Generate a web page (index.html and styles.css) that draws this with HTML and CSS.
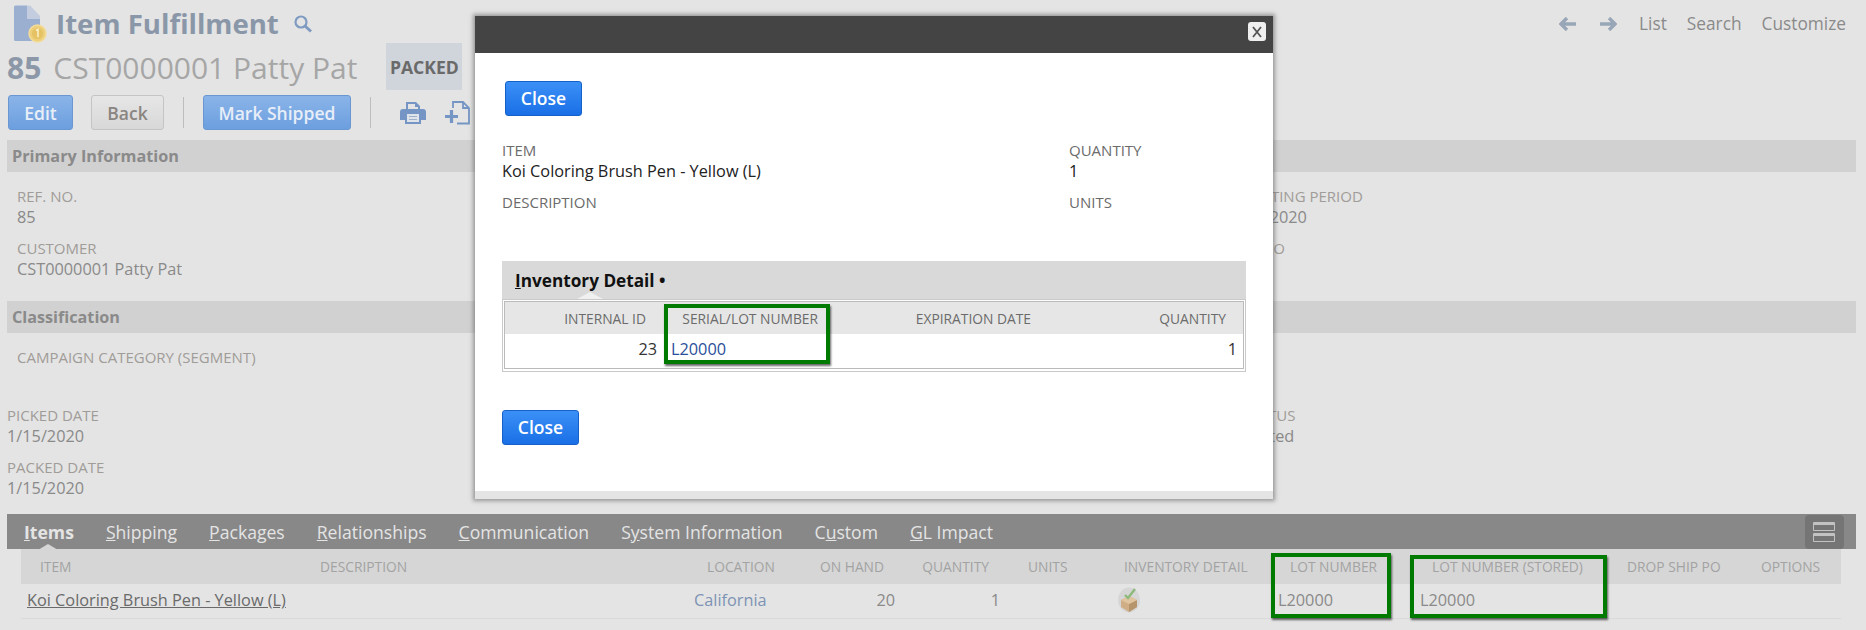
FILE: index.html
```html
<!DOCTYPE html>
<html lang="en">
<head>
<meta charset="utf-8">
<title>Item Fulfillment</title>
<link rel="stylesheet" href="styles.css">
</head>
<body>
<div class="page">
  <header class="title-row">
    <div class="title-left">
      <svg class="doc-icon" width="34" height="38" viewBox="0 0 34 38">
        <path d="M1 2a1.500 1.500 0 0 1 1.500-1.500H14V12a2 2 0 0 0 2 2h11v22H2.500A1.500 1.500 0 0 1 1 34.500z" fill="#9bafd0"/>
        <path d="M14 .5h3L27 11v3H16a2 2 0 0 1-2-2z" fill="#c3cddf"/>
        <circle cx="24.500" cy="28.500" r="8.500" fill="#eccf78" stroke="#f3dc9b" stroke-width="1.500"/>
        <circle cx="24.500" cy="28.500" r="5.500" fill="#e5c263"/>
        <path d="M23 25.500l2-1.200v8" fill="none" stroke="#fbf0cb" stroke-width="1.500"/>
      </svg>
      <h1 class="title">Item Fulfillment</h1>
      <svg class="search-icon" width="20" height="20" viewBox="0 0 20 20">
        <circle cx="8" cy="8" r="5.500" fill="none" stroke="#7f9bc2" stroke-width="2.200"/>
        <path d="M12 12l6 5.500" stroke="#7f9bc2" stroke-width="3" fill="none"/>
      </svg>
    </div>
    <nav class="top-nav">
      <svg class="arrow" width="18" height="14" viewBox="0 0 18 14"><path d="M8 1L2 7l6 6M2.500 7H17" fill="none" stroke="#99a6b8" stroke-width="3.400"/></svg>
      <svg class="arrow arrow-next" width="18" height="14" viewBox="0 0 18 14"><path d="M10 1l6 6-6 6M15.500 7H1" fill="none" stroke="#99a6b8" stroke-width="3.400"/></svg>
      <span class="nav-link nav-list">List</span>
      <span class="nav-link nav-search">Search</span>
      <span class="nav-link">Customize</span>
    </nav>
  </header>

  <div class="record-row">
    <span class="record-num">85</span>
    <span class="record-name">CST0000001 Patty Pat</span>
    <span class="badge">PACKED</span>
  </div>

  <div class="toolbar">
    <button class="btn btn-primary btn-edit">Edit</button>
    <button class="btn btn-plain">Back</button>
    <span class="divider"></span>
    <button class="btn btn-primary btn-ship">Mark Shipped</button>
    <span class="divider"></span>
    <svg class="print-icon" width="26" height="24" viewBox="0 0 26 24">
      <path d="M6 1h10l4 4v4H6z" fill="#7596c4"/>
      <path d="M8 3h7v3h3v2H8z" fill="#e4e4e4"/>
      <path d="M3 8h20a3 3 0 0 1 3 3v8h-5v4H5v-4H0v-8a3 3 0 0 1 3-3z" fill="#7596c4"/>
      <rect x="7" y="13" width="12" height="8" fill="#dfe3ea"/>
      <path d="M9 15.500h8M9 18.500h8" stroke="#9fb1ca" stroke-width="1"/>
    </svg>
    <svg class="add-icon" width="26" height="24" viewBox="0 0 26 24">
      <path d="M8 7V1h10l6 6v15.500H12M18 1v6h6" fill="none" stroke="#7596c4" stroke-width="1.800"/>
      <path d="M0 15.500h13M6.500 9v13" stroke="#7596c4" stroke-width="3.200"/>
    </svg>
  </div>

  <div class="section-bar primary-bar">Primary Information</div>
  <div class="fields primary-fields">
    <div class="column">
      <div class="field">
        <div class="label">REF. NO.</div>
        <div class="value">85</div>
      </div>
      <div class="field">
        <div class="label">CUSTOMER</div>
        <div class="value">CST0000001 Patty Pat</div>
      </div>
    </div>
    <div class="column side-column">
      <div class="field">
        <div class="label">POSTING PERIOD</div>
        <div class="value">Jan 2020</div>
      </div>
      <div class="field">
        <div class="label">RATIO</div>
        <div class="value">&nbsp;</div>
      </div>
    </div>
  </div>

  <div class="section-bar">Classification</div>
  <div class="fields class-fields">
    <div class="column">
      <div class="field">
        <div class="label">CAMPAIGN CATEGORY (SEGMENT)</div>
      </div>
    </div>
  </div>

  <div class="fields date-fields">
    <div class="column">
      <div class="field">
        <div class="label">PICKED DATE</div>
        <div class="value">1/15/2020</div>
      </div>
      <div class="field">
        <div class="label">PACKED DATE</div>
        <div class="value">1/15/2020</div>
      </div>
    </div>
    <div class="column status-column">
      <div class="field">
        <div class="label">STATUS</div>
        <div class="value">Posted</div>
      </div>
    </div>
  </div>

  <div class="tabs">
    <span class="tab tab-active"><u>I</u>tems</span>
    <span class="tab"><u>S</u>hipping</span>
    <span class="tab"><u>P</u>ackages</span>
    <span class="tab"><u>R</u>elationships</span>
    <span class="tab"><u>C</u>ommunication</span>
    <span class="tab">S<u>y</u>stem Information</span>
    <span class="tab">C<u>u</u>stom</span>
    <span class="tab"><u>G</u>L Impact</span>
    <span class="layout-toggle">
      <svg width="24" height="22" viewBox="0 0 24 22">
        <path d="M.500 1.500h21v8h-21zM.500 12.500h21v8h-21z" fill="none" stroke="#c2c2c2"/>
        <path d="M1 2h20v2H1zM1 13h20v2H1z" fill="#c2c2c2"/>
      </svg>
    </span>
  </div>

  <div class="items">
    <div class="items-row items-head">
      <span class="pad-head">ITEM</span>
      <span class="pad-head">DESCRIPTION</span>
      <span class="pad-head">LOCATION</span>
      <span class="pad-end">ON HAND</span>
      <span class="pad-end">QUANTITY</span>
      <span class="pad-head pad-units">UNITS</span>
      <span class="pad-head">INVENTORY DETAIL</span>
      <span class="pad-head">LOT NUMBER</span>
      <span class="pad-head">LOT NUMBER (STORED)</span>
      <span class="pad-head">DROP SHIP PO</span>
      <span class="pad-head">OPTIONS</span>
    </div>
    <div class="items-row items-body">
      <a class="item-link">Koi Coloring Brush Pen - Yellow (L)</a>
      <span></span>
      <a class="loc-link">California</a>
      <span class="num">20</span>
      <span class="num">1</span>
      <span></span>
      <span class="box-cell">
        <svg width="24" height="26" viewBox="0 0 24 26">
          <ellipse cx="12" cy="13" rx="11" ry="12.500" fill="#d6d6d6"/>
          <path d="M4 13l8-4 8 4v7l-8 5-8-5z" fill="#d0ae85"/>
          <path d="M12 17v8l8-5v-7z" fill="#b6946c"/>
          <path d="M4 13l8 4 8-4-8-4z" fill="#e0c4a0"/>
          <path d="M8 8l3 3 7-9" fill="none" stroke="#8dba7c" stroke-width="2.400"/>
        </svg>
      </span>
      <span class="lot">L20000</span>
      <span class="lot">L20000</span>
      <span></span>
      <span></span>
    </div>
  </div>

  <span class="highlight hl-lot"></span>
  <span class="highlight hl-stored"></span>
</div>

<section class="modal">
  <div class="modal-head">
    <button class="modal-x" aria-label="Close">
      <svg width="14" height="14" viewBox="0 0 14 14"><path d="M3 2l8 10M11 2L3 12" stroke="#555" stroke-width="1.800"/></svg>
    </button>
  </div>
  <div class="modal-body">
    <button class="btn-close btn-close-top">Close</button>
    <div class="modal-grid">
      <div class="m-field">
        <div class="m-label">ITEM</div>
        <div class="m-value">Koi Coloring Brush Pen - Yellow (L)</div>
      </div>
      <div class="m-field">
        <div class="m-label">QUANTITY</div>
        <div class="m-value">1</div>
      </div>
      <div class="m-field">
        <div class="m-label">DESCRIPTION</div>
      </div>
      <div class="m-field">
        <div class="m-label">UNITS</div>
      </div>
    </div>
    <div class="inv-head"><h2 class="inv-title"><u>I</u>nventory Detail •</h2></div>
    <div class="inv-frame">
      <div class="inv-row inv-row-head">
        <span>INTERNAL ID</span>
        <span>SERIAL/LOT NUMBER</span>
        <span>EXPIRATION DATE</span>
        <span>QUANTITY</span>
      </div>
      <div class="inv-row inv-row-body">
        <span class="inv-num">23</span>
        <a class="inv-link">L20000</a>
        <span></span>
        <span class="inv-num">1</span>
      </div>
    </div>
    <span class="highlight hl-serial"></span>
    <button class="btn-close btn-close-bottom">Close</button>
  </div>
  <div class="modal-foot"></div>
</section>
</body>
</html>
```
FILE: styles.css
```css
* { box-sizing: border-box; }
html, body { margin: 0; padding: 0; }
body {
  width: 1866px;
  height: 630px;
  overflow: hidden;
  background: #e4e4e4;
  font-family: "Open Sans", "Noto Sans", sans-serif;
  position: relative;
}
.page { position: relative; height: 630px; }

/* Title row */
.title-row {
  height: 43px;
  display: flex;
  justify-content: space-between;
  align-items: center;
  padding: 4px 20px 0 13px;
}
.title-left { display: flex; align-items: center; }
.doc-icon { margin-right: 9px; }
.title {
  margin: -2px 0 0;
  font-size: 27.6px;
  line-height: 36px;
  font-weight: 700;
  color: #8a97a8;
}
.search-icon { margin: 0 0 0 14px; }
.top-nav { display: flex; align-items: center; }
.arrow-next { margin-left: 22px; }
.nav-link { font-size: 17.3px; color: #8a8a8a; margin-left: 20px; }
.nav-list { margin-left: 22px; }

/* Record row */
.record-row {
  height: 47px;
  display: flex;
  align-items: center;
  padding-left: 7px;
}
.record-num { font-size: 30px; font-weight: 700; color: #8c98a8; margin: 1px 12px 0 0; }
.record-name { font-size: 30px; color: #a6a6a6; margin-top: 1px; }
.badge {
  margin-left: 29px;
  width: 76px;
  height: 47px;
  background: #d0d4db;
  color: #6a6a6a;
  font-size: 17.6px;
  font-weight: 700;
  display: flex;
  align-items: center;
  justify-content: center;
}

/* Toolbar */
.toolbar {
  margin-top: 5px;
  height: 35px;
  display: flex;
  align-items: center;
  padding-left: 8px;
}
.btn {
  height: 35px;
  font-family: inherit;
  font-size: 17.5px;
  font-weight: 600;
  border-radius: 3px;
  padding: 0;
}
.btn-primary {
  background: linear-gradient(#8ab4e8, #6c9fdf);
  border: 1px solid #6a97d2;
  color: #e8eef8;
}
.btn-edit { width: 65px; }
.btn-ship { width: 148px; }
.btn-plain {
  width: 73px;
  margin-left: 18px;
  background: linear-gradient(#e6e6e6, #d8d8d8);
  border: 1px solid #c4c4c4;
  color: #8a8580;
}
.divider { width: 1px; height: 31px; background: #bdbdbd; margin: 0 19px; }
.print-icon { margin-left: 10px; }
.add-icon { margin-left: 19px; }

/* Sections */
.section-bar {
  margin: 10px 10px 0 7px;
  height: 32px;
  background: #d1d1d1;
  color: #8a8a8a;
  font-size: 16.2px;
  font-weight: 700;
  line-height: 32px;
  padding-left: 5px;
}
.fields { display: flex; justify-content: space-between; }
.primary-fields { height: 119px; padding: 14px 0 0 17px; }
.primary-fields + .section-bar { margin-top: 10px; }
.class-fields { height: 14px; padding: 14px 0 0 17px; }
.date-fields { margin-top: 58px; padding-left: 7px; height: 109px; }
.column { display: flex; flex-direction: column; gap: 10px; }
.side-column, .status-column { width: 593px; }
.field { min-height: 42px; }
.label { font-size: 15px; line-height: 21px; color: #a09c98; }
.value { font-size: 16.3px; line-height: 21px; color: #8a8a8a; }
.side-column .label, .side-column .value, .status-column .label, .status-column .value {
  margin-left: -31px;
}

/* Tabs */
.tabs {
  margin: 0 10px 0 7px;
  height: 35px;
  background: #888888;
  display: flex;
  align-items: center;
  padding-left: 17px;
  position: relative;
  gap: 32px;
}
.tab { font-size: 17.6px; color: #e4e4e4; line-height: 35px; padding-top: 2px; }
.tab-active { font-weight: 700; position: relative; }
.tab-active::after {
  content: "";
  position: absolute;
  left: 14px;
  bottom: 0;
  border-left: 10px solid transparent;
  border-right: 10px solid transparent;
  border-bottom: 6px solid #d6d6d6;
}
.layout-toggle {
  margin-left: auto;
  margin-right: 12px;
  width: 39px;
  height: 34px;
  background: #757575;
  border-radius: 4px;
  display: flex;
  align-items: center;
  justify-content: center;
}

/* Items table */
.items { margin: 0 25px 0 21px; }
.items-row {
  display: grid;
  grid-template-columns: 280px 387px 112px 101px 105px 99px 166px 142px 195px 134px 99px;
  align-items: center;
  height: 35px;
}
.items-head { background: #d6d6d6; font-size: 13.8px; color: #a3a3a3; }
.items-body { background: #e4e4e4; border-bottom: 1px solid #dadada; padding-bottom: 2px; font-size: 16.3px; color: #8a8a8a; }
.pad-head { padding-left: 19px; white-space: nowrap; }
.pad-units { padding-left: 22px; }
.pad-end { text-align: right; padding-right: 17px; white-space: nowrap; }
.item-link { padding-left: 6px; color: #6a6a6a; text-decoration: underline; white-space: nowrap; }
.loc-link { padding-left: 6px; color: #7d93b4; }
.num { text-align: right; padding-right: 6px; }
.box-cell { padding-left: 12px; display: flex; }
.lot { padding-left: 7px; color: #8a8a8a; }

/* Green callouts drawn over the screenshot */
.highlight {
  position: absolute;
  border: 4px solid #007a00;
  box-shadow: 1px 2px 2px rgba(0, 0, 0, .6);
  pointer-events: none;
}
.hl-lot { left: 1271px; top: 553px; width: 120px; height: 65px; }
.hl-stored { left: 1410px; top: 555px; width: 197px; height: 63px; }
.hl-serial { left: 189px; top: 251px; width: 166px; height: 60px; }

/* Modal */
.modal {
  position: absolute;
  left: 475px;
  top: 16px;
  width: 798px;
  height: 483px;
  background: #fff;
  box-shadow: 0 0 4px 2px rgba(90, 90, 90, .55);
  display: flex;
  flex-direction: column;
}
.modal-head {
  height: 37px;
  background: #444444;
  display: flex;
  justify-content: flex-end;
  padding: 6px 7px 0 0;
}
.modal-x {
  width: 18px;
  height: 19px;
  padding: 0;
  background: #efefef;
  border: 0;
  border-radius: 3px;
  display: flex;
  align-items: center;
  justify-content: center;
}
.modal-body { flex: 1; position: relative; padding: 0 27px; }
.modal-foot { height: 8px; background: #e4e4e4; }
.btn-close {
  display: block;
  width: 77px;
  height: 35px;
  padding: 0 0 2px;
  background: linear-gradient(#3b90f7, #1a6fe6);
  border: 1px solid #1561c8;
  border-radius: 3px;
  color: #fff;
  font-family: inherit;
  font-size: 17.5px;
  font-weight: 600;
}
.btn-close-top { margin: 28px 0 0 3px; }
.modal-grid {
  margin-top: 24px;
  display: grid;
  grid-template-columns: 567px 1fr;
  row-gap: 10px;
  align-content: start;
  height: 121px;
}
.m-field { min-height: 21px; }
.m-label { font-size: 15px; line-height: 21px; color: #6b6b6b; }
.m-value { font-size: 16.3px; line-height: 21px; color: #222; }
.inv-head { height: 38px; background: #d9d9d9; padding: 0 13px; position: relative; }
.inv-head::after {
  content: "";
  position: absolute;
  left: 75px;
  bottom: 0;
  border-left: 13px solid transparent;
  border-right: 13px solid transparent;
  border-bottom: 7px solid #f0f0f0;
}
.inv-title { margin: 0; font-size: 17.2px; font-weight: 700; line-height: 40px; color: #111; }
.inv-frame {
  border: 1px solid #c9c9c9;
  padding: 1px 1px 2px;
  height: 73px;
}
.inv-row {
  display: grid;
  grid-template-columns: 158px 172px 213px 1fr;
  align-items: center;
  border-left: 1px solid #bbb;
  border-right: 1px solid #bbb;
}
.inv-row-head {
  height: 33px;
  background: #e6e6e6;
  border-top: 1px solid #bbb;
  font-size: 13.8px;
  color: #6b6b6b;
  text-align: right;
}
.inv-row-head span { padding-right: 17px; white-space: nowrap; }
.inv-row-body {
  height: 35px;
  padding-bottom: 4px;
  background: #fff;
  border-bottom: 1px solid #bbb;
  font-size: 16.3px;
  color: #333;
}
.inv-num { text-align: right; padding-right: 6px; }
.inv-link { padding-left: 8px; color: #2a4f9a; }
.btn-close-bottom { margin-top: 38px; }
```
